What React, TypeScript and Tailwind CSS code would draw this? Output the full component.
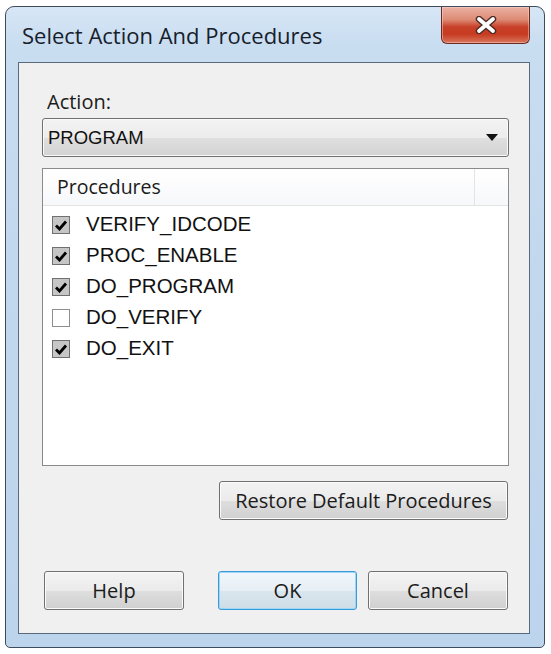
import React from "react";

const segoe = "font-['Open_Sans','Noto_Sans',sans-serif]";
const arial = "font-['Liberation_Sans',Arial,sans-serif]";

const procedures = [
  { name: "VERIFY_IDCODE", checked: true },
  { name: "PROC_ENABLE", checked: true },
  { name: "DO_PROGRAM", checked: true },
  { name: "DO_VERIFY", checked: false },
  { name: "DO_EXIT", checked: true },
];

function CheckBox({ checked }: { checked: boolean }) {
  return (
    <div
      className={`w-[18px] h-[18px] flex items-center justify-center border ${
        checked ? "border-[#707070] bg-[#c6c6c6]" : "border-[#8e8e8e] bg-white"
      }`}
    >
      {checked && (
        <svg width="14" height="12" viewBox="0 0 14 12">
          <path d="M2 6.5 L5.5 10 L12 2.5" fill="none" stroke="#000" strokeWidth="2.8" strokeLinejoin="miter" />
        </svg>
      )}
    </div>
  );
}

function Button({ label, w, primary }: { label: string; w: string; primary?: boolean }) {
  return (
    <button
      className={`${w} h-[39px] rounded-[3px] border flex items-center justify-center text-[20px] text-[#1b1b1b] ${segoe} ${
        primary
          ? "border-[#3a9ad9] shadow-[inset_0_0_0_1px_#9ed6f5] bg-[linear-gradient(180deg,#f1f7fb_0%,#e6eff5_50%,#d9e6ee_51%,#cfdde7_100%)]"
          : "border-[#707070] shadow-[inset_0_0_0_1px_#fbfbfb] bg-[linear-gradient(180deg,#f3f3f3_0%,#ebebeb_50%,#dedede_51%,#d0d0d0_100%)]"
      }`}
    >
      {label}
    </button>
  );
}

export default function App() {
  return (
    <div className="w-[551px] h-[654px] bg-white pl-[5px] pt-[6px]">
      <div className="w-[540px] h-[642px] flex flex-col rounded-t-[9px] rounded-b-[5px] border border-[#3d4b5c] bg-[linear-gradient(180deg,#d6e6f5_0%,#c9ddf1_6%,#c2d8ee_40%,#bcd4ec_100%)]">
        {/* ===== title bar ===== */}
        <div className="h-[55px] flex justify-between items-start">
          <span className={`mt-[12px] ml-[16px] text-[22px] text-[#17202b] ${segoe}`}>
            Select Action And Procedures
          </span>
          <div className="mr-[14px] w-[89px] h-[37px] rounded-b-[6px] border border-t-0 border-[#6b2a22] flex items-center justify-center bg-[linear-gradient(180deg,#eab0a2_0%,#dd8b75_35%,#c8412a_55%,#c63a20_75%,#d8765c_100%)] shadow-[inset_0_0_0_1px_rgba(255,220,210,0.45)]">
            <svg width="22" height="18" viewBox="0 0 22 18">
              <path d="M4 3 L18 15 M18 3 L4 15" stroke="#4a2a24" strokeWidth="6.5" strokeLinecap="round" />
              <path d="M4 3 L18 15 M18 3 L4 15" stroke="#ffffff" strokeWidth="3.8" strokeLinecap="round" />
            </svg>
          </div>
        </div>

        {/* ===== client area ===== */}
        <div className="ml-[12px] mr-[14px] mb-[13px] flex-1 border border-[#5a6a7c] bg-[#f0f0f0] flex flex-col pl-[23px] pr-[20px]">
          <div className={`mt-[27px] ml-[5px] h-[24px] leading-[24px] text-[20px] text-[#1b1b1b] ${segoe}`}>Action:</div>

          <div className="mt-[4px] h-[39px] rounded-[3px] border border-[#707070] flex items-center justify-between pl-[5px] pr-[10px] bg-[linear-gradient(180deg,#f3f3f3_0%,#ececec_50%,#dfdfdf_51%,#d3d3d3_100%)] shadow-[inset_0_0_0_1px_#fafafa]">
            <span className={`text-[18.5px] text-[#111] ${arial}`}>PROGRAM</span>
            <svg width="12" height="7" viewBox="0 0 12 7">
              <path d="M0 0 H12 L6 7 Z" fill="#111" />
            </svg>
          </div>

          {/* ===== procedures list ===== */}
          <div className="mt-[11px] h-[298px] border border-[#8a8a8a] bg-white flex flex-col">
            <div className="h-[37px] flex border-b border-[#e2e2e2] bg-[linear-gradient(180deg,#ffffff_0%,#f7f8fa_100%)]">
              <div className={`w-[432px] border-r border-[#e4e4e4] flex items-center pl-[14px] text-[19.5px] text-[#1b1b1b] ${segoe}`}>
                Procedures
              </div>
              <div className="flex-1" />
            </div>
            <div className="pt-[3px] flex flex-col">
              {procedures.map((p) => (
                <div key={p.name} className="h-[31px] flex items-center pl-[9px] gap-[16px]">
                  <CheckBox checked={p.checked} />
                  <span className={`text-[20.5px] text-[#111] ${arial}`}>{p.name}</span>
                </div>
              ))}
            </div>
          </div>

          <div className="mt-[15px] self-end mr-[1px]">
            <Button label="Restore Default Procedures" w="w-[289px]" />
          </div>

          <div className="mt-[51px] flex items-center">
            <div className="ml-[2px]">
              <Button label="Help" w="w-[140px]" />
            </div>
            <div className="ml-[34px]">
              <Button label="OK" w="w-[139px]" primary />
            </div>
            <div className="ml-[11px]">
              <Button label="Cancel" w="w-[140px]" />
            </div>
          </div>
        </div>
      </div>
    </div>
  );
}
